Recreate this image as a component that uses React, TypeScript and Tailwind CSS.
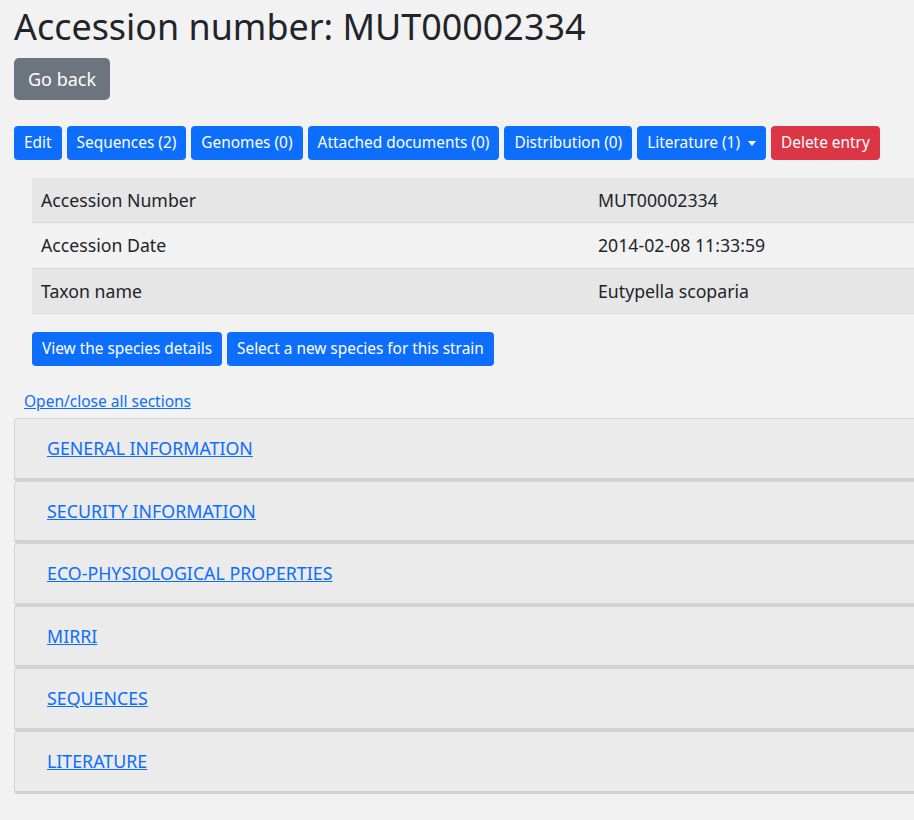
import React from "react";

const btn = "h-[34px] px-[10px] rounded-[4px] text-white text-[15.4px] leading-none flex items-center";

export default function App() {
  const sections = [
    "GENERAL INFORMATION",
    "SECURITY INFORMATION",
    "ECO-PHYSIOLOGICAL PROPERTIES",
    "MIRRI",
    "SEQUENCES",
    "LITERATURE",
  ];
  const rows = [
    ["Accession Number", "MUT00002334", true],
    ["Accession Date", "2014-02-08 11:33:59", false],
    ["Taxon name", "Eutypella scoparia", true],
  ] as const;
  return (
    <div className="min-h-[820px] w-[914px] overflow-hidden bg-[#f2f2f2] text-[#212529] font-['Noto_Sans',sans-serif] pl-[14px]">
      <h1 className="text-[35.9px] leading-[42px] pt-[6px] font-normal whitespace-nowrap">Accession number: MUT00002334</h1>
      <button className="mt-[10px] h-[42px] px-[14px] rounded-[5px] bg-[#6c757d] text-white text-[18px]">Go back</button>
      <div className="mt-[26px] flex gap-[5px]">
        <button className={btn + " bg-[#0d6efd]"}>Edit</button>
        <button className={btn + " bg-[#0d6efd]"}>Sequences (2)</button>
        <button className={btn + " bg-[#0d6efd]"}>Genomes (0)</button>
        <button className={btn + " bg-[#0d6efd]"}>Attached documents (0)</button>
        <button className={btn + " bg-[#0d6efd]"}>Distribution (0)</button>
        <button className={btn + " bg-[#0d6efd] gap-[8px]"}>
          Literature (1)
          <span className="w-0 h-0 border-l-[4px] border-r-[4px] border-t-[5px] border-l-transparent border-r-transparent border-t-white"></span>
        </button>
        <button className={btn + " bg-[#dc3545]"}>Delete entry</button>
      </div>
      <div className="mt-[18px] ml-[18px] w-[900px]">
        {rows.map(([k, v, dark], i) => (
          <div
            key={k}
            className={
              "flex items-center text-[17.7px] border-b border-[#d5d8dc] " +
              (dark ? "bg-[#e6e6e6] " : "bg-[#f2f2f2] ") +
              (i === 1 ? "h-[46px]" : "h-[45px]")
            }
          >
            <div className="w-[566px] pl-[9px]">{k}</div>
            <div>{v}</div>
          </div>
        ))}
      </div>
      <div className="mt-[18px] ml-[18px] flex gap-[5px]">
        <button className={btn + " h-[33px] bg-[#0d6efd]"}>View the species details</button>
        <button className={btn + " h-[33px] bg-[#0d6efd]"}>Select a new species for this strain</button>
      </div>
      <a href="#" className="block mt-[26px] ml-[10px] text-[15.5px] leading-[18px] text-[#0d6efd] underline">Open/close all sections</a>
      <div className="mt-[8px] w-[910px] flex flex-col">
        {sections.map((s) => (
          <div key={s} className="h-[62.6px] bg-[#ebebeb] border border-[#d4d4d4] border-b-[3px] border-b-[#d2d2d2] rounded-[3px] flex items-center pl-[32px]">
            <a href="#" className="text-[17.8px] text-[#0d6efd] underline">{s}</a>
          </div>
        ))}
      </div>
    </div>
  );
}
